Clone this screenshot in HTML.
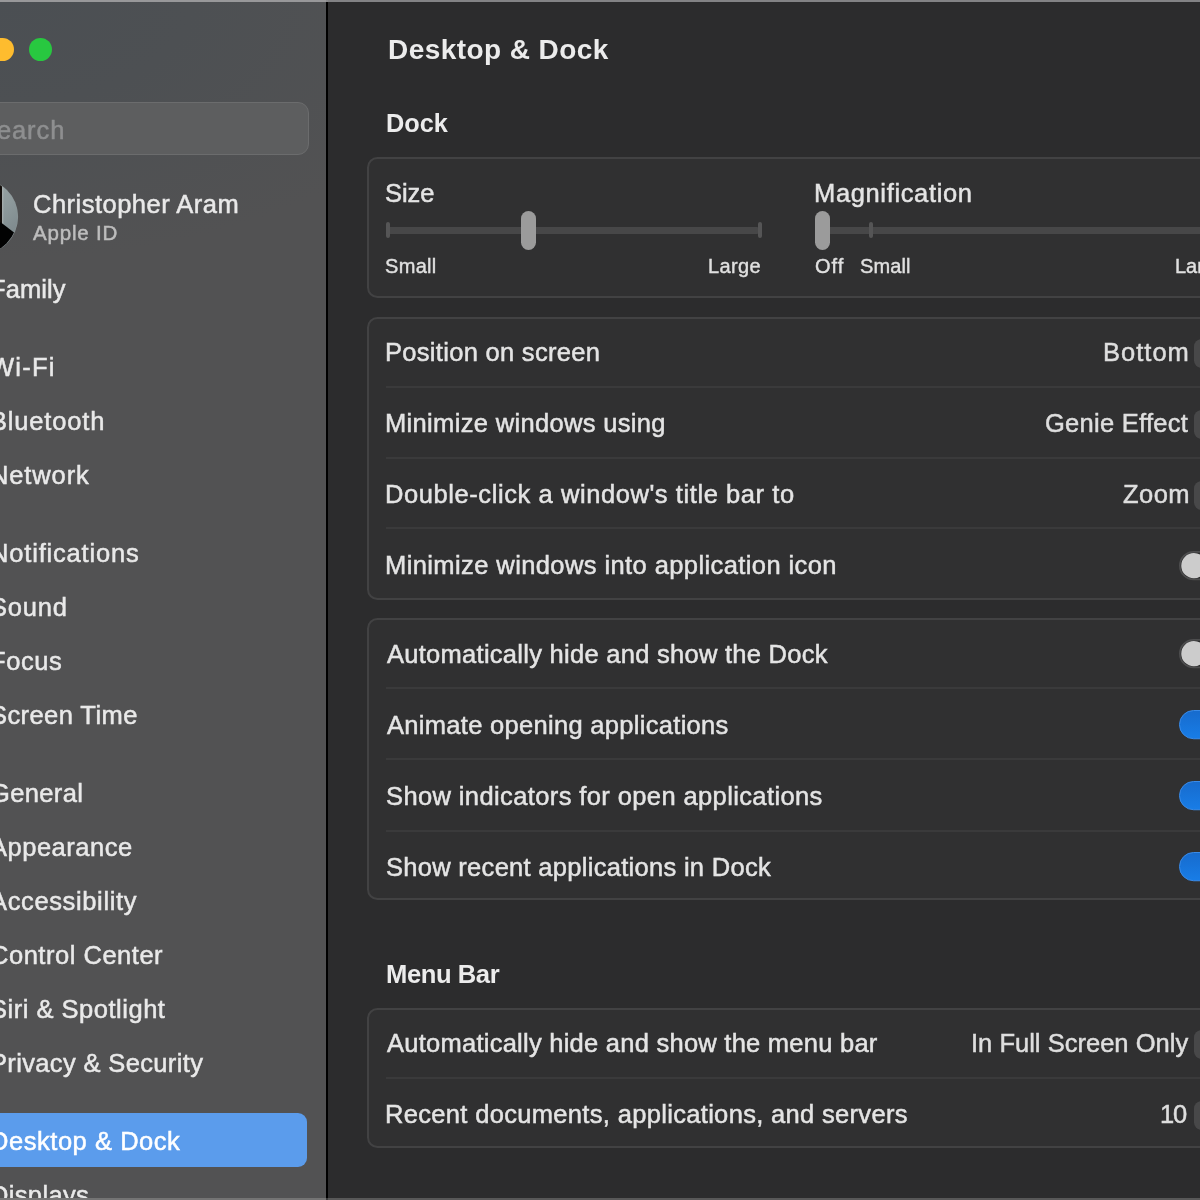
<!DOCTYPE html>
<html>
<head>
<meta charset="utf-8">
<title>Desktop &amp; Dock</title>
<style>
*{box-sizing:border-box;margin:0;padding:0}
html,body{width:1200px;height:1200px;overflow:hidden;background:#2c2c2d}
body{position:relative;font-family:"Liberation Sans",sans-serif;color:#e6e6e6}
.t{position:absolute;line-height:40px;white-space:nowrap;will-change:transform}
.sb{color:#e9e9e9;-webkit-text-stroke:0.5px currentColor}
.lbl{color:#e4e4e4;-webkit-text-stroke:0.5px currentColor}
.val{color:#dedede;-webkit-text-stroke:0.5px currentColor}
.sm{color:#e0e0e0;-webkit-text-stroke:0.4px currentColor}
.hd{color:#ececec;font-weight:700}
#sidebar{position:absolute;left:0;top:0;width:327px;height:1200px;background:radial-gradient(ellipse 480px 260px at 0 0,#4b4f53 0%,#4d5053 40%,rgba(82,82,83,0) 100%),#525253;overflow:hidden}
#divider{position:absolute;left:325.6px;top:0;width:2.6px;height:1200px;background:linear-gradient(90deg,rgba(0,0,0,0),#000 25%,#000 75%,rgba(0,0,0,0))}
#content{position:absolute;left:328px;top:0;width:872px;height:1200px;background:#2c2c2d;overflow:hidden}
#topline{position:absolute;left:0;top:0;width:1200px;height:2.2px;background:linear-gradient(90deg,#98989a 0,#98989a 326px,#8a8a8c 326px,#8a8a8c 328px,#838385 328px);z-index:5}
#botline{position:absolute;left:0;top:1197.75px;width:1200px;height:2.25px;background:linear-gradient(90deg,#747474 0,#747474 326px,#3a3a3a 326px,#3a3a3a 328px,#585858 328px);z-index:5}
.tl{position:absolute;width:23.4px;height:23.6px;border-radius:50%;top:37.9px}
#search{position:absolute;left:-20px;top:102px;width:329px;height:53px;border-radius:11px;background:#5d5e5f;border:1.5px solid #6b6c6d}
#sel{position:absolute;left:-20px;top:1113.3px;width:327px;height:53.7px;border-radius:9px;background:#5b9cec}
.card{position:absolute;left:38.5px;width:900px;border:2px solid #424243;border-radius:10.5px;background:#303031}
.sep{position:absolute;left:58px;width:820px;height:2px;background:#3a3a3b}
.track{position:absolute;height:7px;border-radius:3.5px;background:#474748}
.tick{position:absolute;width:3.5px;height:16px;border-radius:2px;background:#555556}
.thumb{position:absolute;width:15.2px;height:39px;border-radius:7.6px;background:#9b9b9b}
.pop{position:absolute;left:866px;width:40px;height:29.5px;border-radius:7.5px;background:#484849}
.tg{position:absolute;left:850.75px;overflow:hidden}
</style>
</head>
<body>
<div id="sidebar">
  <div class="tl" style="left:-9.7px;background:#febc2e"></div>
  <div class="tl" style="left:28.7px;background:#28c840"></div>
  <div id="search"></div>
  <svg id="avatar" style="position:absolute;left:-58.5px;top:178px" width="78" height="78" viewBox="0 0 78 78">
    <defs>
      <linearGradient id="avg" x1="0" y1="0" x2="1" y2="1"><stop offset="0" stop-color="#a9b3b2"/><stop offset="0.6" stop-color="#8d999b"/><stop offset="1" stop-color="#727d82"/></linearGradient>
      <clipPath id="avc"><circle cx="38.2" cy="38.7" r="37.4"/></clipPath>
    </defs>
    <circle cx="38.2" cy="38.7" r="37.9" fill="#8a9496"/>
    <g clip-path="url(#avc)">
      <rect x="0" y="0" width="78" height="78" fill="url(#avg)"/>
      <rect x="0" y="0" width="60.2" height="78" fill="#15100d"/>
      <rect x="60.2" y="8" width="1" height="38" fill="#c8cfcf" opacity="0.7"/>
      <polygon points="0,44.5 59,44.5 72,54.5 78,78 0,78" fill="#020202"/>
    </g>
  </svg>
  <div id="sel"></div>
</div>
<div id="content">
  <svg width="0" height="0" style="position:absolute"><defs><linearGradient id="tgon" x1="0" y1="0" x2="0" y2="1"><stop offset="0" stop-color="#176bcd"/><stop offset="1" stop-color="#187de7"/></linearGradient></defs></svg>
  <div class="card" style="top:157px;height:141px"></div>
  <div class="track" style="left:59px;top:227px;width:373px"></div>
  <div class="tick" style="left:58px;top:222px"></div>
  <div class="tick" style="left:430px;top:222px"></div>
  <div class="thumb" style="left:193px;top:211px"></div>
  <div class="track" style="left:488px;top:227px;width:420px"></div>
  <div class="tick" style="left:541px;top:222px"></div>
  <div class="thumb" style="left:487px;top:211px"></div>

  <div class="card" style="top:317px;height:282.5px"></div>
  <div class="pop" style="top:338.6px"></div>
  <div class="sep" style="top:386px"></div>
  <div class="pop" style="top:409.6px"></div>
  <div class="sep" style="top:457px"></div>
  <div class="pop" style="top:480.6px"></div>
  <div class="sep" style="top:527.4px"></div>
  <svg class="tg" style="top:550.75px" width="24" height="30" viewBox="0 0 24 30"><rect x="0.85" y="0.85" width="60" height="27.55" rx="13.78" fill="#2a2a2b" stroke="#4d4d4e" stroke-width="1.7"/><circle cx="14.9" cy="14.65" r="12.65" fill="#cccccc"/></svg>

  <div class="card" style="top:617.6px;height:282.7px"></div>
  <svg class="tg" style="top:639px" width="24" height="30" viewBox="0 0 24 30"><rect x="0.85" y="0.85" width="60" height="27.55" rx="13.78" fill="#2a2a2b" stroke="#4d4d4e" stroke-width="1.7"/><circle cx="14.9" cy="14.65" r="12.65" fill="#cccccc"/></svg>
  <div class="sep" style="top:687.2px"></div>
  <svg class="tg" style="top:710px" width="24" height="30" viewBox="0 0 24 30"><rect x="0.5" y="0.5" width="60" height="28.25" rx="14.1" fill="url(#tgon)" stroke="#3a8be8" stroke-width="1"/></svg>
  <div class="sep" style="top:758.2px"></div>
  <svg class="tg" style="top:781px" width="24" height="30" viewBox="0 0 24 30"><rect x="0.5" y="0.5" width="60" height="28.25" rx="14.1" fill="url(#tgon)" stroke="#3a8be8" stroke-width="1"/></svg>
  <div class="sep" style="top:829.8px"></div>
  <svg class="tg" style="top:852px" width="24" height="30" viewBox="0 0 24 30"><rect x="0.5" y="0.5" width="60" height="28.25" rx="14.1" fill="url(#tgon)" stroke="#3a8be8" stroke-width="1"/></svg>

  <div class="card" style="top:1007.8px;height:140.7px"></div>
  <div class="pop" style="top:1029.6px"></div>
  <div class="sep" style="top:1077px"></div>
  <div class="pop" style="top:1100.6px"></div>
</div>
<div id="divider"></div>
<div id="sb0" class="t sb" style="left:-10.00px;top:268.66px;font-size:25.5px;letter-spacing:0.074px;">Family</div>
<div id="sb1" class="t sb" style="left:-10.00px;top:347.16px;font-size:25.5px;letter-spacing:1.235px;">Wi-Fi</div>
<div id="sb2" class="t sb" style="left:-10.00px;top:401.16px;font-size:25.5px;letter-spacing:0.822px;">Bluetooth</div>
<div id="sb3" class="t sb" style="left:-10.00px;top:455.16px;font-size:25.5px;letter-spacing:0.873px;">Network</div>
<div id="sb4" class="t sb" style="left:-10.00px;top:533.16px;font-size:25.5px;letter-spacing:0.820px;">Notifications</div>
<div id="sb5" class="t sb" style="left:-10.00px;top:587.16px;font-size:25.5px;letter-spacing:0.781px;">Sound</div>
<div id="sb6" class="t sb" style="left:-10.00px;top:641.16px;font-size:25.5px;letter-spacing:0.605px;">Focus</div>
<div id="sb7" class="t sb" style="left:-10.00px;top:694.86px;font-size:25.5px;letter-spacing:0.419px;">Screen Time</div>
<div id="sb8" class="t sb" style="left:-10.00px;top:772.86px;font-size:25.5px;letter-spacing:0.357px;">General</div>
<div id="sb9" class="t sb" style="left:-10.00px;top:826.66px;font-size:25.5px;letter-spacing:0.517px;">Appearance</div>
<div id="sb10" class="t sb" style="left:-10.00px;top:880.66px;font-size:25.5px;letter-spacing:0.631px;">Accessibility</div>
<div id="sb11" class="t sb" style="left:-10.00px;top:934.66px;font-size:25.5px;letter-spacing:0.521px;">Control Center</div>
<div id="sb12" class="t sb" style="left:-10.00px;top:988.66px;font-size:25.5px;letter-spacing:0.512px;">Siri &amp; Spotlight</div>
<div id="sb13" class="t sb" style="left:-10.00px;top:1042.66px;font-size:25.5px;letter-spacing:0.353px;">Privacy &amp; Security</div>
<div id="sb14" class="t sb" style="left:-10.00px;top:1120.86px;font-size:25.5px;letter-spacing:0.541px;color:#fff;">Desktop &amp; Dock</div>
<div id="sb15" class="t sb" style="left:-10.00px;top:1174.86px;font-size:25.5px;letter-spacing:0.346px;">Displays</div>
<div id="name" class="t sb" style="left:32.57px;top:183.86px;font-size:25.5px;letter-spacing:0.484px;">Christopher Aram</div>
<div id="aid" class="t sb" style="left:33.07px;top:212.60px;font-size:20.5px;letter-spacing:0.802px;color:#bdbdbd;">Apple ID</div>
<div id="stxt" class="t sb" style="left:-21.00px;top:109.66px;font-size:25.5px;letter-spacing:0.916px;color:#8e8f90;">Search</div>
<div id="title" class="t hd" style="left:387.72px;top:29.60px;font-size:28px;letter-spacing:0.435px;">Desktop &amp; Dock</div>
<div id="hDock" class="t hd" style="left:386.39px;top:103.43px;font-size:25.3px;letter-spacing:-0.036px;">Dock</div>
<div id="hMenu" class="t hd" style="left:386.01px;top:954.23px;font-size:25.6px;letter-spacing:-0.424px;">Menu Bar</div>
<div id="lb0" class="t lbl" style="left:385.16px;top:332.16px;font-size:25.5px;letter-spacing:0.299px;">Position on screen</div>
<div id="lb1" class="t lbl" style="left:385.16px;top:403.16px;font-size:25.5px;letter-spacing:0.331px;">Minimize windows using</div>
<div id="lb2" class="t lbl" style="left:385.16px;top:474.16px;font-size:25.5px;letter-spacing:0.578px;">Double-click a window's title bar to</div>
<div id="lb3" class="t lbl" style="left:385.16px;top:545.16px;font-size:25.5px;letter-spacing:0.404px;">Minimize windows into application icon</div>
<div id="lb4" class="t lbl" style="left:386.99px;top:633.66px;font-size:25.5px;letter-spacing:0.275px;">Automatically hide and show the Dock</div>
<div id="lb5" class="t lbl" style="left:386.99px;top:704.66px;font-size:25.5px;letter-spacing:0.303px;">Animate opening applications</div>
<div id="lb6" class="t lbl" style="left:385.77px;top:775.66px;font-size:25.5px;letter-spacing:0.387px;">Show indicators for open applications</div>
<div id="lb7" class="t lbl" style="left:385.77px;top:846.66px;font-size:25.5px;letter-spacing:0.293px;">Show recent applications in Dock</div>
<div id="lb8" class="t lbl" style="left:386.99px;top:1023.46px;font-size:25.5px;letter-spacing:0.252px;">Automatically hide and show the menu bar</div>
<div id="lb9" class="t lbl" style="left:385.16px;top:1094.16px;font-size:25.5px;letter-spacing:0.325px;">Recent documents, applications, and servers</div>
<div id="lSize" class="t lbl" style="left:385.05px;top:173.16px;font-size:25.5px;letter-spacing:-0.048px;">Size</div>
<div id="lMag" class="t lbl" style="left:814.36px;top:173.16px;font-size:25.5px;letter-spacing:0.643px;">Magnification</div>
<div id="v0" class="t val" style="left:1102.88px;top:332.16px;font-size:25.5px;letter-spacing:1.013px;">Bottom</div>
<div id="v1" class="t val" style="left:1044.95px;top:403.16px;font-size:25.5px;letter-spacing:0.265px;">Genie Effect</div>
<div id="v2" class="t val" style="left:1122.80px;top:474.16px;font-size:25.5px;letter-spacing:0.450px;">Zoom</div>
<div id="v3" class="t val" style="left:970.78px;top:1023.46px;font-size:25.5px;letter-spacing:0.016px;">In Full Screen Only</div>
<div id="v4" class="t val" style="left:1160.28px;top:1094.16px;font-size:25.5px;letter-spacing:-1.224px;">10</div>
<div id="sm0" class="t sm" style="left:385.35px;top:246.27px;font-size:20px;letter-spacing:0.326px;">Small</div>
<div id="sm1" class="t sm" style="left:708.14px;top:246.27px;font-size:20px;letter-spacing:0.392px;">Large</div>
<div id="sm2" class="t sm" style="left:815.29px;top:246.27px;font-size:20px;letter-spacing:0.981px;">Off</div>
<div id="sm3" class="t sm" style="left:860.07px;top:246.27px;font-size:20px;letter-spacing:0.119px;">Small</div>
<div id="sm4" class="t sm" style="left:1175.14px;top:246.27px;font-size:20px;letter-spacing:0.000px;">Large</div>
<div id="topline"></div>
<div id="botline"></div>

</body>
</html>
